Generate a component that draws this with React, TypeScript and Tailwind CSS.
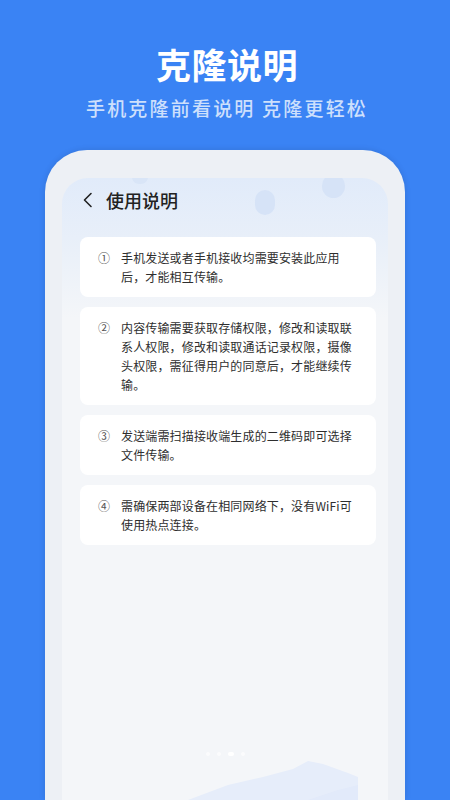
const cjk = { fontFamily: '"Noto Sans CJK SC", "Noto Sans", sans-serif' };

const tips = [
  { no: "①", text: "手机发送或者手机接收均需要安装此应用后，才能相互传输。" },
  {
    no: "②",
    text: "内容传输需要获取存储权限，修改和读取联系人权限，修改和读取通话记录权限，摄像头权限，需征得用户的同意后，才能继续传输。",
  },
  { no: "③", text: "发送端需扫描接收端生成的二维码即可选择文件传输。" },
  { no: "④", text: "需确保两部设备在相同网络下，没有WiFi可使用热点连接。" },
];

function TipCard({ no, text }: { no: string; text: string }) {
  return (
    <div className="flex rounded-[8px] bg-white pl-[18px] pr-[10px] py-[11px]">
      <span className="w-[23px] shrink-0 text-[12px] leading-[19px] text-[#555]">{no}</span>
      <p className="w-[236px] text-[12px] leading-[19px] tracking-[0.15px] text-[#2e2e2e]">{text}</p>
    </div>
  );
}

export default function App() {
  return (
    <div className="flex h-[800px] w-[450px] flex-col items-center overflow-hidden bg-[#3a83f4]" style={cjk}>
      <h1 className="pt-[44px] pl-[4px] text-[35px] font-bold leading-[40px] tracking-[0.5px] text-white">克隆说明</h1>
      <p className="mt-[12px] pl-[4px] text-[19px] font-medium leading-[24px] tracking-[2.2px] text-white/75">手机克隆前看说明 克隆更轻松</p>

      <div className="mt-[30px] flex w-[360px] flex-1 flex-col rounded-t-[42px] bg-[#edf0f5] px-[17px] pt-[28px] shadow-[0_0_6px_rgba(0,0,0,0.12)]">
        <div className="relative flex flex-1 flex-col overflow-hidden rounded-t-[26px] bg-[linear-gradient(180deg,#e1ebfa_0px,#e8eff9_60px,#f4f6f9_140px,#f4f6f9_100%)]">
          <div className="absolute left-[193px] top-[12px] h-[25px] w-[20px] rounded-full bg-[#d6e3f7]" />
          <div className="absolute left-[260px] top-[-4px] h-[24px] w-[23px] rounded-full bg-[#d6e3f7]" />
          <div className="absolute left-[70px] top-[-8px] h-[14px] w-[16px] rounded-full bg-[#d9e5f7]" />

          <div className="relative flex h-[44px] items-center pl-[20px]">
            <svg width="11" height="16" viewBox="0 0 11 16" className="text-[#222]">
              <polyline points="9,1.5 2.5,8 9,14.5" fill="none" stroke="currentColor" strokeWidth="1.6" strokeLinecap="round" strokeLinejoin="round" />
            </svg>
            <span className="ml-[13px] text-[18px] font-medium leading-[24px] text-[#222]">使用说明</span>
          </div>

          <div className="relative mt-[15px] flex flex-col gap-[10px] pl-[18px] pr-[12px]">
            {tips.map((t) => (
              <TipCard key={t.no} no={t.no} text={t.text} />
            ))}
          </div>

          <div className="flex-1" />
          <div className="relative flex h-[60px] items-start justify-center pt-[12px]">
            <div className="flex gap-[7px]">
              <span className="h-[4px] w-[4px] rounded-full bg-white/60" />
              <span className="h-[4px] w-[4px] rounded-full bg-white/60" />
              <span className="h-[4px] w-[6px] rounded-full bg-white" />
              <span className="h-[4px] w-[4px] rounded-full bg-white/60" />
            </div>
            <svg className="absolute bottom-0 right-0" width="200" height="45" viewBox="0 0 200 45">
              <path d="M0 45 L40 30 L75 22 L105 14 L120 6 L135 9 L160 18 L170 22 L170 45 Z" fill="#e6edfa" />
              <path d="M120 45 L150 35 L170 30 L170 45 Z" fill="#e2eafa" />
            </svg>
          </div>
        </div>
      </div>
    </div>
  );
}
